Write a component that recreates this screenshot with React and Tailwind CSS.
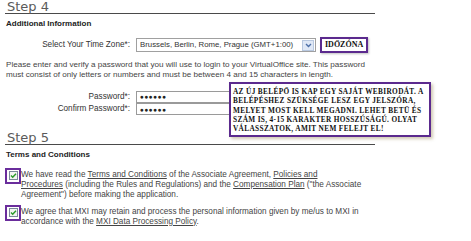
import React from 'react';

function StepTitle({ children }) {
  return (
    <div className="w-[370px] border-b border-[#4a4a4a]">
      <h2 className="font-['DejaVu_Sans',sans-serif] text-[13px] leading-[13px] text-[#5a5a5a] pl-[2px]">{children}</h2>
    </div>
  );
}

function Field({ label, children }) {
  return (
    <div className="flex items-center">
      <span className="w-[127px] text-right pr-[2px] text-[8.2px] text-[#333] whitespace-nowrap">{label}</span>
      {children}
    </div>
  );
}

function Masked() {
  return (
    <div className="ml-[4px] w-[110px] h-[12px] border border-[#9a9a9a] bg-white flex items-center pl-[3px] text-[6.5px] tracking-[0.5px] text-[#222]">
      ●●●●●●
    </div>
  );
}

function MarkedCheck() {
  return (
    <div className="w-[16px] h-[16px] shrink-0 border-2 border-[#6a2d9c] flex items-center justify-center bg-white">
      <div className="w-[9px] h-[9px] border border-[#7a8a9a] bg-[#f2f5f2] flex items-center justify-center">
        <svg width="7" height="7" viewBox="0 0 7 7">
          <path d="M1 3.6l1.7 1.7L6 1.7" stroke="#2a9a2a" strokeWidth="1.4" fill="none" />
        </svg>
      </div>
    </div>
  );
}

export default function App() {
  return (
    <div className="relative w-[471px] h-[241px] bg-white overflow-hidden font-['Liberation_Sans',Arial,sans-serif] text-[#444] px-[5px]">
      <StepTitle>Step 4</StepTitle>
      <p className="mt-[5px] text-[8px] leading-[10px] font-bold text-[#222] pl-[1px]">Additional Information</p>

      <div className="mt-[8px]">
        <Field label="Select Your Time Zone*:">
          <div className="ml-[4px] w-[180px] h-[14px] border border-[#a0a0a0] flex items-center justify-between pl-[3px] pr-[1px] bg-white">
            <span className="text-[7.8px] text-[#333] whitespace-nowrap">Brussels, Berlin, Rome, Prague (GMT+1:00)</span>
            <span className="w-[12px] h-[11px] bg-[#dfe8f6] border border-[#b8c8e0] flex items-center justify-center">
              <svg width="7" height="5" viewBox="0 0 7 5">
                <path d="M1 1l2.5 2.5L6 1" stroke="#4d6fa8" strokeWidth="1.4" fill="none" />
              </svg>
            </span>
          </div>
          <div className="ml-[4px] h-[16px] px-[3px] border-2 border-[#5b2a8e] flex items-center font-['Liberation_Serif',serif] font-bold text-[8px] text-[#111] shadow-[1px_1px_2px_rgba(0,0,0,0.25)]">
            IDŐZÓNA
          </div>
        </Field>
      </div>

      <p className="mt-[7px] text-[8.1px] leading-[10px] text-[#444] w-[370px] pl-[1px]">
        Please enter and verify a password that you will use to login to your VirtualOffice site. This password must consist of only letters or numbers and must be between 4 and 15 characters in length.
      </p>

      <div className="mt-[11px] flex flex-col">
        <Field label="Password*:"><Masked /></Field>
        <Field label="Confirm Password*:"><Masked /></Field>
      </div>

      <div className="absolute left-[229px] top-[82px] w-[202px] h-[55px] border-2 border-[#5b2a8e] bg-white shadow-[2px_2px_3px_rgba(120,100,40,0.35)] px-[2px] pt-[3px] font-['Liberation_Serif',serif] font-bold text-[7.3px] leading-[9.3px] text-[#111] uppercase tracking-[0.35px]">
        Az új belépő is kap egy saját webirodát. A belépéshez szüksége lesz egy jelszóra, melyet most kell megadni. Lehet betű és szám is, 4-15 karakter hosszúságú. Olyat válasszatok, amit nem felejt el!
      </div>

      <div className="mt-[15px]">
        <StepTitle>Step 5</StepTitle>
      </div>
      <p className="mt-[5px] text-[8px] leading-[10px] font-bold text-[#222] pl-[1px]">Terms and Conditions</p>

      <div className="mt-[8px] flex flex-col gap-[5px] text-[8.2px] leading-[10px] text-[#444]">
        <div className="flex">
          <MarkedCheck />
          <p className="w-[350px] pt-[2px]">
            We have read the <span className="underline">Terms and Conditions</span> of the Associate Agreement, <span className="underline">Policies and<br />Procedures</span> (including the Rules and Regulations) and the <span className="underline">Compensation Plan</span> ("the Associate Agreement") before making the application.
          </p>
        </div>
        <div className="flex">
          <MarkedCheck />
          <p className="w-[350px] pt-[2px]">
            We agree that MXI may retain and process the personal information given by me/us to MXI in accordance with the <span className="underline">MXI Data Processing Policy</span>.
          </p>
        </div>
      </div>
    </div>
  );
}
